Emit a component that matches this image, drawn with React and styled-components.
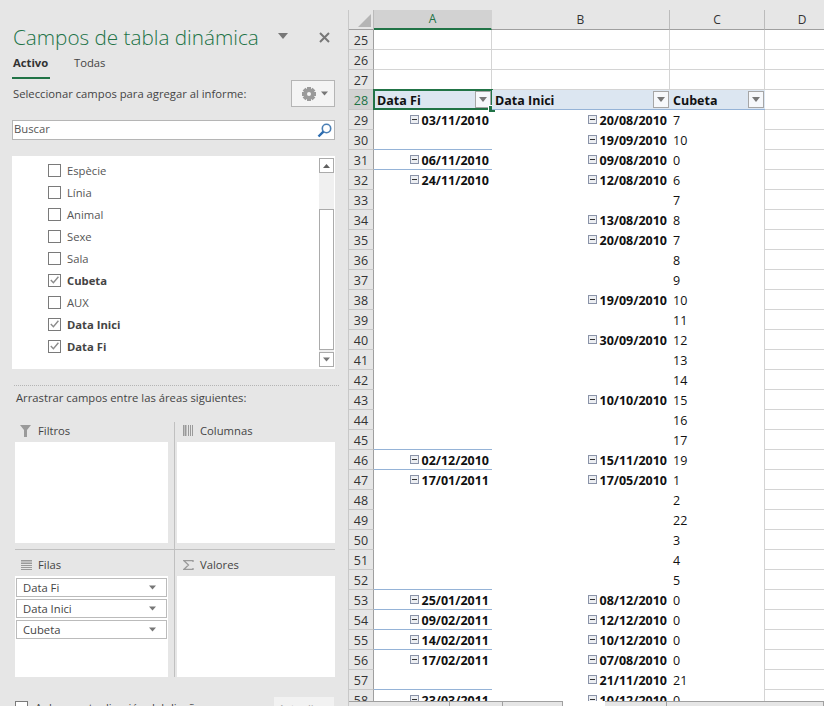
import React from 'react'
import styled, { createGlobalStyle } from 'styled-components'

const GlobalStyle = createGlobalStyle`
  html, body {
    margin: 0;
    height: 706px;
    overflow: hidden;
    background: #e6e6e6;
    font-family: "Open Sans", "Noto Sans", sans-serif;
  }
`

const fields = [
  { name: 'Espècie' },
  { name: 'Línia' },
  { name: 'Animal' },
  { name: 'Sexe' },
  { name: 'Sala' },
  { name: 'Cubeta', checked: true },
  { name: 'AUX' },
  { name: 'Data Inici', checked: true },
  { name: 'Data Fi', checked: true },
]

const rows = [
  { n: 25 }, { n: 26 }, { n: 27 },
  { n: 29, a: '03/11/2010', b: '20/08/2010', c: '7' },
  { n: 30, b: '19/09/2010', c: '10' },
  { n: 31, a: '06/11/2010', b: '09/08/2010', c: '0' },
  { n: 32, a: '24/11/2010', b: '12/08/2010', c: '6' },
  { n: 33, c: '7' },
  { n: 34, b: '13/08/2010', c: '8' },
  { n: 35, b: '20/08/2010', c: '7' },
  { n: 36, c: '8' },
  { n: 37, c: '9' },
  { n: 38, b: '19/09/2010', c: '10' },
  { n: 39, c: '11' },
  { n: 40, b: '30/09/2010', c: '12' },
  { n: 41, c: '13' },
  { n: 42, c: '14' },
  { n: 43, b: '10/10/2010', c: '15' },
  { n: 44, c: '16' },
  { n: 45, c: '17' },
  { n: 46, a: '02/12/2010', b: '15/11/2010', c: '19' },
  { n: 47, a: '17/01/2011', b: '17/05/2010', c: '1' },
  { n: 48, c: '2' },
  { n: 49, c: '22' },
  { n: 50, c: '3' },
  { n: 51, c: '4' },
  { n: 52, c: '5' },
  { n: 53, a: '25/01/2011', b: '08/12/2010', c: '0' },
  { n: 54, a: '09/02/2011', b: '12/12/2010', c: '0' },
  { n: 55, a: '14/02/2011', b: '10/12/2010', c: '0' },
  { n: 56, a: '17/02/2011', b: '07/08/2010', c: '0' },
  { n: 57, b: '21/11/2010', c: '21' },
  { n: 58, a: '23/03/2011', b: '10/12/2010', c: '0' },
]

const Caret = ({ size = 7, color = '#777' }) => (
  <svg width={size} height={Math.ceil(size * 0.6)} viewBox="0 0 10 6">
    <polygon points="0,0 10,0 5,6" fill={color} />
  </svg>
)

const GearIcon = () => (
  <svg width="14" height="14" viewBox="0 0 14 14">
    <g fill="#9a9a9a">
      <rect x="5" y="0" width="4" height="14" />
      <rect x="0" y="5" width="14" height="4" />
      <rect x="5" y="0" width="4" height="14" transform="rotate(45 7 7)" />
      <rect x="0" y="5" width="14" height="4" transform="rotate(45 7 7)" />
      <circle cx="7" cy="7" r="5" />
    </g>
    <circle cx="7" cy="7" r="2" fill="#f4f4f4" />
  </svg>
)

const SearchIcon = () => (
  <svg width="15" height="15" viewBox="0 0 15 15" fill="none">
    <circle cx="9.5" cy="5.5" r="4.2" stroke="#4a7fb5" strokeWidth="1.6" />
    <line x1="6.4" y1="8.6" x2="1.5" y2="13.5" stroke="#2b6cb0" strokeWidth="2.4" />
  </svg>
)

const FilterIcon = () => (
  <svg width="12" height="12" viewBox="0 0 12 12">
    <polygon points="0,0 11,0 7,5 7,12 4,12 4,5" fill="#9a9a9a" />
  </svg>
)

const ColumnsIcon = () => (
  <svg width="10" height="11" viewBox="0 0 10 11" fill="#9a9a9a">
    <rect x="0" y="0" width="1.5" height="11" />
    <rect x="2" y="0" width="1.5" height="11" />
    <rect x="5" y="0" width="1" height="11" />
    <rect x="7" y="0" width="1" height="11" />
    <rect x="9" y="0" width="1" height="11" />
  </svg>
)

const RowsIcon = () => (
  <svg width="11" height="10" viewBox="0 0 11 10" fill="#9a9a9a">
    <rect x="0" y="0" width="11" height="1.5" />
    <rect x="0" y="2.5" width="11" height="1.5" />
    <rect x="0" y="5" width="11" height="1" />
    <rect x="0" y="7" width="11" height="1" />
    <rect x="0" y="9" width="11" height="1" />
  </svg>
)

const SigmaIcon = () => (
  <svg width="11" height="10" viewBox="0 0 11 10" fill="none">
    <polyline points="10,2 10,0.7 1,0.7 5.5,5 1,9.3 10,9.3 10,8" stroke="#9a9a9a" strokeWidth="1.3" />
  </svg>
)

const CloseIcon = () => (
  <svg width="11" height="11" viewBox="0 0 11 11">
    <path d="M1 1 L10 10 M10 1 L1 10" stroke="#777" strokeWidth="2" />
  </svg>
)

const CheckIcon = () => (
  <svg width="9" height="8" viewBox="0 0 9 8" fill="none">
    <polyline points="0.8,4 3.4,6.8 8.4,0.8" stroke="#8c8c8c" strokeWidth="1.4" />
  </svg>
)

const ScrollUp = () => (
  <svg width="7" height="4" viewBox="0 0 7 4">
    <polygon points="0,4 7,4 3.5,0" fill="#606060" />
  </svg>
)

const App = () => (
  <>
    <GlobalStyle />
    <Page>
      <Pane>
        <TitleRow>
          <Title>Campos de tabla dinámica</Title>
          <TitleCaret><Caret size={10} /></TitleCaret>
          <CloseIcon />
        </TitleRow>
        <Tabs>
          <Tab $active>Activo</Tab>
          <Tab>Todas</Tab>
        </Tabs>
        <SelectRow>
          <PaneLabel>Seleccionar campos para agregar al informe:</PaneLabel>
          <GearButton>
            <GearIcon />
            <Caret />
          </GearButton>
        </SelectRow>
        <SearchBox>
          <SearchText>Buscar</SearchText>
          <SearchIcon />
        </SearchBox>
        <FieldPanel>
          <FieldList>
            {fields.map(f => (
              <FieldRow key={f.name}>
                <CheckBox>{f.checked && <CheckIcon />}</CheckBox>
                <FieldName $checked={f.checked}>{f.name}</FieldName>
              </FieldRow>
            ))}
          </FieldList>
          <ScrollBar>
            <ScrollButton><ScrollUp /></ScrollButton>
            <ScrollThumb />
            <ScrollButton $down><Caret /></ScrollButton>
          </ScrollBar>
        </FieldPanel>
        <DottedLine />
        <DragLabel>Arrastrar campos entre las áreas siguientes:</DragLabel>
        <AreaGrid>
          <AreaCell $left>
            <AreaHeader><AreaIcon><FilterIcon /></AreaIcon>Filtros</AreaHeader>
            <AreaBox />
          </AreaCell>
          <AreaCell>
            <AreaHeader><AreaIcon><ColumnsIcon /></AreaIcon>Columnas</AreaHeader>
            <AreaBox />
          </AreaCell>
          <AreaCell $left $lower>
            <AreaHeader><AreaIcon><RowsIcon /></AreaIcon>Filas</AreaHeader>
            <AreaBox>
              {['Data Fi', 'Data Inici', 'Cubeta'].map(name => (
                <Pill key={name}>
                  {name}
                  <Caret />
                </Pill>
              ))}
            </AreaBox>
          </AreaCell>
          <AreaCell $lower>
            <AreaHeader><AreaIcon><SigmaIcon /></AreaIcon>Valores</AreaHeader>
            <AreaBox />
          </AreaCell>
        </AreaGrid>
        <DeferRow>
          <DeferBox />
          <DeferLabel>Aplazar actualización del diseño</DeferLabel>
          <UpdateButton>Actualizar</UpdateButton>
        </DeferRow>
      </Pane>

      <Sheet>
        <SheetRow>
          <Corner>
            <svg width="13" height="13" viewBox="0 0 13 13">
              <polygon points="13,0 13,13 0,13" fill="#b5b5b5" />
            </svg>
          </Corner>
          <ColHead $selected>A</ColHead>
          <ColHead>B</ColHead>
          <ColHead>C</ColHead>
          <ColHead>D</ColHead>
        </SheetRow>
        <SheetBody>
          {rows.map((r, i) => (
            <React.Fragment key={r.n}>
              {r.n === 29 && (
                <SheetRow>
                  <RowHead $selected>28</RowHead>
                  <PivotHead>
                    Data Fi
                    <FilterButton><Caret size={8} /></FilterButton>
                    <Selection><FillHandle /></Selection>
                  </PivotHead>
                  <PivotHead>
                    Data Inici
                    <FilterButton><Caret size={8} /></FilterButton>
                  </PivotHead>
                  <PivotHead>
                    Cubeta
                    <FilterButton><Caret size={8} /></FilterButton>
                  </PivotHead>
                  <GridCell />
                </SheetRow>
              )}
              <SheetRow>
                <RowHead>{r.n}</RowHead>
                {r.n < 28 ? (
                  <>
                    <GridCell />
                    <GridCell />
                    <GridCell />
                  </>
                ) : (
                  <>
                    <DateCell $line={!!rows[i + 1]?.a}>
                      {r.a && <><Collapse />{r.a}</>}
                    </DateCell>
                    <DateCell>
                      {r.b && <><Collapse />{r.b}</>}
                    </DateCell>
                    <ValueCell>{r.c}</ValueCell>
                  </>
                )}
                <GridCell />
              </SheetRow>
            </React.Fragment>
          ))}
        </SheetBody>
        <HScroll>
          <ScrollPart $w={101} />
          <ScrollPart $w={53} />
          <ScrollPart $w={60} />
          <ScrollGap />
          <ScrollPart $w={62} />
          <ScrollPart $w={157} />
        </HScroll>
      </Sheet>
    </Page>
  </>
)

const Page = styled.div`
  display: flex;
  width: 824px;
  height: 706px;
  overflow: hidden;
`

const Pane = styled.div`
  width: 348px;
  height: 706px;
  flex: none;
  box-sizing: border-box;
  padding: 22px 13px 0 12px;
  overflow: hidden;
  font-size: 11.25px;
  color: #444;
`

const TitleRow = styled.div`
  display: flex;
  align-items: center;
  height: 30px;
  padding: 0 5px 0 1px;
`

const Title = styled.div`
  font-size: 20.7px;
  font-weight: 300;
  color: #217346;
  width: 265px;
  white-space: nowrap;
`

const TitleCaret = styled.div`
  display: flex;
  flex: 1;
  margin-bottom: 3px;
`

const Tabs = styled.div`
  display: flex;
  gap: 23px;
  height: 27px;
  margin-bottom: 1px;
`

const Tab = styled.div`
  box-sizing: border-box;
  width: 38px;
  padding: 3px 0 0 1px;
  color: ${p => (p.$active ? '#333' : '#444')};
  font-weight: ${p => (p.$active ? 700 : 400)};
  border-bottom: 2px solid ${p => (p.$active ? '#217346' : 'transparent')};
`

const SelectRow = styled.div`
  display: flex;
  align-items: center;
  justify-content: space-between;
  height: 27px;
  padding-left: 1px;
`

const PaneLabel = styled.div`
  white-space: nowrap;
`

const GearButton = styled.div`
  display: flex;
  align-items: center;
  justify-content: space-between;
  box-sizing: border-box;
  width: 44px;
  height: 27px;
  padding: 0 6px 0 10px;
  background: #f4f4f4;
  border: 1px solid #b5b5b5;
`

const SearchBox = styled.div`
  display: flex;
  align-items: center;
  justify-content: space-between;
  box-sizing: border-box;
  height: 20px;
  margin-top: 13px;
  padding: 0 2px 0 1px;
  background: #fff;
  border: 1px solid #b5b5b5;
  color: #555;
`

const SearchText = styled.span`
  margin-bottom: 3px;
`

const FieldPanel = styled.div`
  display: flex;
  height: 213px;
  margin-top: 16px;
  background: #fff;
`

const FieldList = styled.div`
  flex: 1;
  padding: 3px 0 0 36px;
`

const FieldRow = styled.div`
  display: flex;
  align-items: center;
  gap: 6px;
  height: 22px;
`

const CheckBox = styled.div`
  display: flex;
  align-items: center;
  justify-content: center;
  box-sizing: border-box;
  width: 13px;
  height: 13px;
  background: #fff;
  border: 1px solid #7a7a7a;
`

const FieldName = styled.div`
  font-weight: ${p => (p.$checked ? 700 : 400)};
  color: ${p => (p.$checked ? '#444' : '#555')};
`

const ScrollBar = styled.div`
  display: flex;
  flex-direction: column;
  box-sizing: border-box;
  width: 15px;
  height: 209px;
  margin: 2px 1px 0 0;
  background: #f0f0f0;
`

const ScrollButton = styled.div`
  display: flex;
  align-items: center;
  justify-content: center;
  box-sizing: border-box;
  height: 15px;
  flex: none;
  margin-top: ${p => (p.$down ? '2px' : '0')};
  background: #fff;
  border: 1px solid #ababab;
`

const ScrollThumb = styled.div`
  box-sizing: border-box;
  height: 141px;
  margin-top: auto;
  background: #fff;
  border: 1px solid #ababab;
`

const DottedLine = styled.div`
  height: 0;
  margin: 16px -4px 0 2px;
  border-top: 1px dotted #b5b5b5;
`

const DragLabel = styled.div`
  height: 24px;
  padding: 3px 0 0 4px;
  box-sizing: border-box;
  margin-top: 1px;
  white-space: nowrap;
`

const AreaGrid = styled.div`
  display: grid;
  grid-template-columns: 160px 1fr;
  margin: 11px 0 0 3px;
`

const AreaCell = styled.div`
  box-sizing: border-box;
  padding-top: ${p => (p.$lower ? '6px' : '0')};
  padding-bottom: ${p => (p.$lower ? '0' : '6px')};
  padding-right: ${p => (p.$left ? '6px' : '0')};
  padding-left: ${p => (p.$left ? '0' : '2px')};
  border-right: ${p => (p.$left ? '1px solid #c0c0c0' : 'none')};
  border-bottom: ${p => (p.$lower ? 'none' : '1px solid #c0c0c0')};
`

const AreaHeader = styled.div`
  display: flex;
  align-items: center;
  box-sizing: border-box;
  height: 20px;
  padding: 0 0 3px 3px;
`

const AreaIcon = styled.span`
  display: flex;
  justify-content: center;
  width: 16px;
  margin-right: 4px;
`

const AreaBox = styled.div`
  display: flex;
  flex-direction: column;
  gap: 2px;
  box-sizing: border-box;
  height: 101px;
  padding: 2px 1px;
  background: #fff;
`

const Pill = styled.div`
  display: flex;
  align-items: center;
  justify-content: space-between;
  box-sizing: border-box;
  height: 19px;
  padding: 0 10px 1px 6px;
  background: #fff;
  border: 1px solid #bbb;
`

const DeferRow = styled.div`
  display: flex;
  align-items: flex-start;
  margin: 20px 1px 0 3px;
`

const DeferBox = styled.div`
  box-sizing: border-box;
  width: 13px;
  height: 13px;
  margin-top: 4px;
  background: #fff;
  border: 1px solid #7a7a7a;
`

const DeferLabel = styled.div`
  flex: 1;
  margin: 3px 0 0 7px;
  white-space: nowrap;
`

const UpdateButton = styled.div`
  width: 60px;
  height: 24px;
  padding-top: 4px;
  text-align: center;
  background: #f2f2f2;
  color: #aaa;
  white-space: nowrap;
`

const Sheet = styled.div`
  display: flex;
  flex-direction: column;
  flex: 1;
  min-width: 0;
  height: 696px;
  margin-top: 10px;
  overflow: hidden;
  border-left: 1px solid #c8c8c8;
  background: #fff;
  font-size: 12.5px;
  color: #111;
`

const SheetBody = styled.div`
  flex: 1;
  min-height: 0;
  overflow: hidden;
`

const SheetRow = styled.div`
  display: grid;
  grid-template-columns: 25px 118px 178px 95px 75px;
  height: 20px;
`

const Corner = styled.div`
  display: flex;
  align-items: flex-end;
  justify-content: flex-end;
  box-sizing: border-box;
  padding: 0 2px 2px 0;
  background: #e6e6e6;
  border-right: 1px solid #bbb;
  border-bottom: 1px solid #9f9f9f;
`

const ColHead = styled.div`
  display: flex;
  align-items: center;
  justify-content: center;
  box-sizing: border-box;
  font-size: 12px;
  padding-bottom: 1px;
  color: ${p => (p.$selected ? '#217346' : '#333')};
  background: ${p => (p.$selected ? '#d2d2d2' : '#e6e6e6')};
  border-right: 1px solid ${p => (p.$selected ? '#d2d2d2' : '#bbb')};
  border-bottom: ${p => (p.$selected ? '2px solid #217346' : '1px solid #9f9f9f')};
`

const RowHead = styled.div`
  display: flex;
  align-items: center;
  justify-content: center;
  box-sizing: border-box;
  padding-top: 2px;
  font-size: 12.5px;
  color: ${p => (p.$selected ? '#217346' : '#333')};
  background: ${p => (p.$selected ? '#d2d2d2' : '#e6e6e6')};
  border-right: 1px solid #9f9f9f;
  border-bottom: 1px solid #c8c8c8;
`

const GridCell = styled.div`
  box-sizing: border-box;
  border-right: 1px solid #d4d4d4;
  border-bottom: 1px solid #d4d4d4;
`

const PivotHead = styled.div`
  position: relative;
  display: flex;
  align-items: center;
  justify-content: space-between;
  box-sizing: border-box;
  padding: 1px 1px 0 3px;
  font-weight: 700;
  background: #dce6f1;
  border-bottom: 1px solid #95b3d7;
`

const FilterButton = styled.div`
  display: flex;
  align-items: center;
  justify-content: center;
  box-sizing: border-box;
  width: 16px;
  height: 17px;
  margin-top: -1px;
  background: #f6f8fb;
  border: 1px solid #a6a6a6;
`

const Selection = styled.div`
  position: absolute;
  inset: -1px -1px -1px -1px;
  border: 2px solid #217346;
`

const FillHandle = styled.div`
  position: absolute;
  right: -4px;
  bottom: -4px;
  width: 6px;
  height: 6px;
  background: #217346;
  border: 1px solid #fff;
  border-width: 1px 0 0 1px;
`

const DateCell = styled.div`
  display: flex;
  align-items: center;
  justify-content: flex-end;
  box-sizing: border-box;
  padding: 2px 3px 0 0;
  font-weight: 700;
  border-bottom: 1px solid ${p => (p.$line ? '#95b3d7' : 'transparent')};
`

const ValueCell = styled.div`
  display: flex;
  align-items: center;
  box-sizing: border-box;
  padding: 0 0 0 3px;
  border-right: 1px solid #d4d4d4;
`

const Collapse = styled.span`
  position: relative;
  box-sizing: border-box;
  width: 9px;
  height: 9px;
  margin: 0 2px 3px 0;
  background: #eceef2;
  border: 1px solid #8a93a8;

  &::after {
    content: '';
    position: absolute;
    left: 1px;
    right: 1px;
    top: 3px;
    height: 1px;
    background: #333;
  }
`

const HScroll = styled.div`
  display: flex;
  flex: none;
  height: 5px;
  background: #fff;
`

const ScrollPart = styled.div`
  box-sizing: border-box;
  width: ${p => p.$w}px;
  background: #e6e6e6;
  border-top: 1px solid #a0a0a0;
  border-right: 1px solid #a0a0a0;
`

const ScrollGap = styled.div`
  width: 42px;
`

export default App
